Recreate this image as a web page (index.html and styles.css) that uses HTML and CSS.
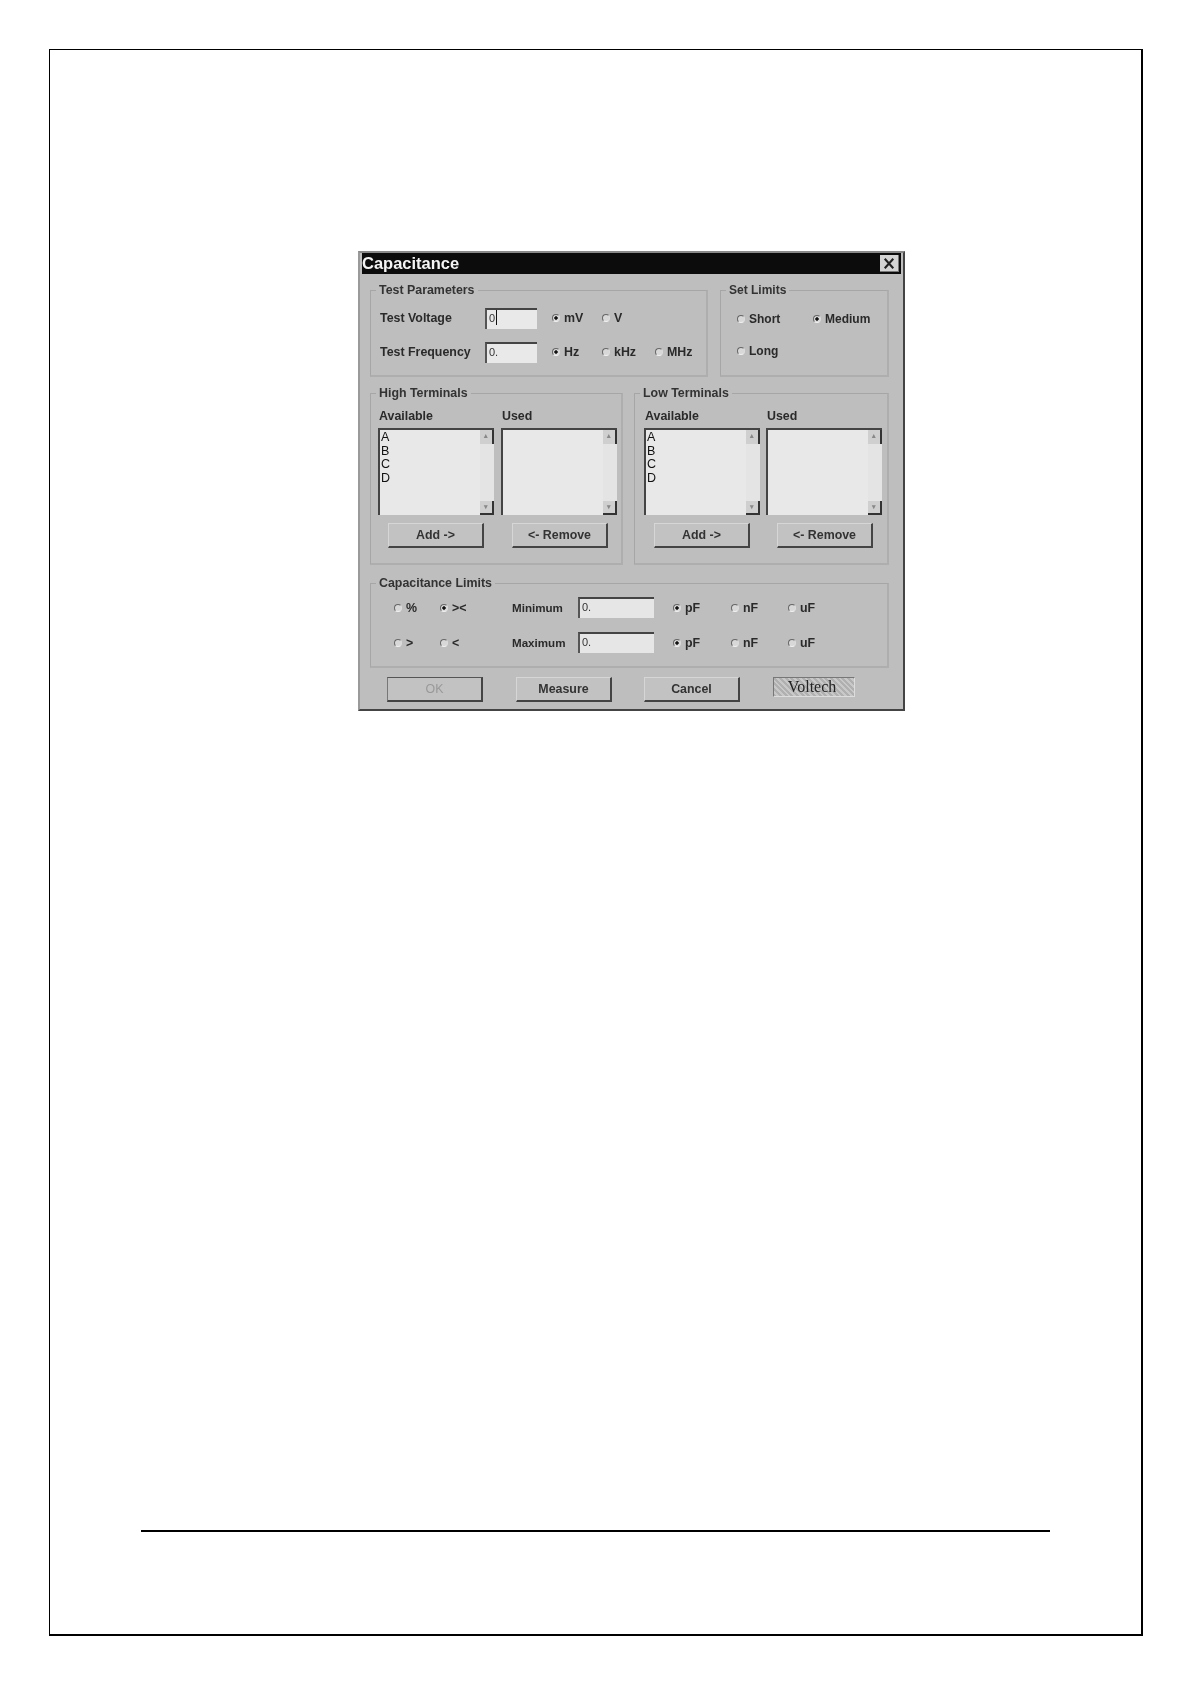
FILE: index.html
```html
<!DOCTYPE html>
<html lang="en">
<head>
<meta charset="utf-8">
<title>Capacitance</title>
<link rel="stylesheet" href="styles.css">
</head>
<body>
<main class="page">
  <section class="dialog">
    <header class="titlebar">
      <span class="title">Capacitance</span>
      <span class="close"><svg width="19" height="17" viewBox="0 0 19 17"><path d="M5 3.5 L14 13.5 M14 3.5 L5 13.5" stroke="#222" stroke-width="2.2" fill="none"/></svg></span>
    </header>

    <div class="row row-top">
      <div class="group group-params">
        <span class="legend">Test Parameters</span>
        <div class="param-row param-first">
          <span class="lbl w-param">Test Voltage</span>
          <span class="field field-param"><span class="caret">0</span></span>
          <span class="opt w-mv"><i class="radio on"></i>mV</span>
          <span class="opt"><i class="radio"></i>V</span>
        </div>
        <div class="param-row param-second">
          <span class="lbl w-param">Test Frequency</span>
          <span class="field field-param">0.</span>
          <span class="opt w-mv"><i class="radio on"></i>Hz</span>
          <span class="opt w-khz"><i class="radio"></i>kHz</span>
          <span class="opt"><i class="radio"></i>MHz</span>
        </div>
      </div>
      <div class="group group-limits">
        <span class="legend">Set Limits</span>
        <div class="limit-row limit-first">
          <span class="opt w-short"><i class="radio"></i>Short</span>
          <span class="opt"><i class="radio on"></i>Medium</span>
        </div>
        <div class="limit-row limit-second">
          <span class="opt"><i class="radio"></i>Long</span>
        </div>
      </div>
    </div>

    <div class="row row-mid">
      <div class="group group-term group-high">
        <span class="legend">High Terminals</span>
        <div class="term-cols">
          <div class="term-col"><span class="lbl cap">Available</span>
            <div class="listbox"><div class="items"><div>A</div><div>B</div><div>C</div><div>D</div></div>
              <div class="scroll"><span class="sb">&#9652;</span><span class="sb sb-end">&#9662;</span></div></div>
            <div class="btn btn-term">Add -&gt;</div>
          </div>
          <div class="term-col"><span class="lbl cap">Used</span>
            <div class="listbox"><div class="items"></div>
              <div class="scroll"><span class="sb">&#9652;</span><span class="sb sb-end">&#9662;</span></div></div>
            <div class="btn btn-term btn-remove">&lt;- Remove</div>
          </div>
        </div>
      </div>
      <div class="group group-term group-low">
        <span class="legend">Low Terminals</span>
        <div class="term-cols">
          <div class="term-col"><span class="lbl cap">Available</span>
            <div class="listbox"><div class="items"><div>A</div><div>B</div><div>C</div><div>D</div></div>
              <div class="scroll"><span class="sb">&#9652;</span><span class="sb sb-end">&#9662;</span></div></div>
            <div class="btn btn-term">Add -&gt;</div>
          </div>
          <div class="term-col"><span class="lbl cap">Used</span>
            <div class="listbox"><div class="items"></div>
              <div class="scroll"><span class="sb">&#9652;</span><span class="sb sb-end">&#9662;</span></div></div>
            <div class="btn btn-term btn-remove">&lt;- Remove</div>
          </div>
        </div>
      </div>
    </div>

    <div class="group group-cap">
      <span class="legend">Capacitance Limits</span>
      <div class="cap-row cap-first">
        <span class="opt w-pct"><i class="radio"></i>%</span>
        <span class="opt w-cmp"><i class="radio on"></i>&gt;&lt;</span>
        <span class="lbl w-minmax">Minimum</span>
        <span class="field field-cap">0.</span>
        <span class="opt w-pf"><i class="radio on"></i>pF</span>
        <span class="opt w-nf"><i class="radio"></i>nF</span>
        <span class="opt"><i class="radio"></i>uF</span>
      </div>
      <div class="cap-row cap-second">
        <span class="opt w-pct"><i class="radio"></i>&gt;</span>
        <span class="opt w-cmp"><i class="radio"></i>&lt;</span>
        <span class="lbl w-minmax">Maximum</span>
        <span class="field field-cap">0.</span>
        <span class="opt w-pf"><i class="radio on"></i>pF</span>
        <span class="opt w-nf"><i class="radio"></i>nF</span>
        <span class="opt"><i class="radio"></i>uF</span>
      </div>
    </div>

    <footer class="actions">
      <div class="btn btn-action btn-disabled">OK</div>
      <div class="btn btn-action">Measure</div>
      <div class="btn btn-action">Cancel</div>
      <div class="logo">Voltech</div>
    </footer>
  </section>
  <hr class="rule">
</main>
</body>
</html>
```

FILE: styles.css
```css
* { box-sizing: border-box; }
html, body { margin: 0; background: #fff; }
body { width: 1191px; height: 1684px; padding: 49px 0 0 49px; font-family: "Liberation Sans", Arial, sans-serif; }

.page {
  width: 1094px; height: 1587px;
  border-style: solid; border-color: #000;
  border-width: 1px 2px 2px 1px;
  padding-top: 201px;
  display: flex; flex-direction: column;
}

.dialog {
  width: 547px; height: 460px;
  margin-left: 308px;
  background: #bebebe;
  border-style: solid;
  border-width: 2px;
  border-color: #8a8a8a #444 #444 #9a9a9a;
  font-size: 12.4px; font-weight: 700; color: #2a2a2a;
  filter: blur(0.6px);
  display: flex; flex-direction: column;
  padding: 0 14px 0 10px;
}

.titlebar {
  height: 21px; margin: 0 -12px 0 -8px;
  background: #0c0c0c; color: #f4f4f4;
  display: flex; align-items: center; justify-content: space-between;
  padding: 0 2px 0 0;
}
.title { font-size: 16.5px; }
.close { width: 19px; height: 17px; background: #d4d4d4; display: flex; align-items: center; justify-content: center; border-right: 1px solid #777; border-bottom: 1px solid #777; }

.row { display: flex; }
.row-top { margin-top: 16px; gap: 12px; }
.row-mid { margin-top: 16px; gap: 11px; }

.group {
  position: relative;
  border: 1px solid #a6a6a6;
  border-bottom: 2px solid #aeaeae;
  border-right: 2px solid #aeaeae;
}
.legend {
  position: absolute; top: -7px; left: 5px;
  background: #bebebe; padding: 0 3px;
  line-height: 13px; white-space: nowrap;
  color: #333;
}

.group-params { width: 338px; height: 87px; padding-left: 9px; }
.group-limits { width: 169px; height: 87px; padding-left: 16px; font-size: 12px; }
.group-high { width: 253px; height: 172px; padding-left: 7px; }
.group-low { width: 255px; height: 172px; padding-left: 9px; }
.group-low .term-cols { gap: 6px; }
.group-cap { width: 519px; height: 85px; margin-top: 18px; padding-left: 23px; }

.lbl { display: block; white-space: nowrap; }
.opt { display: flex; align-items: center; gap: 4px; white-space: nowrap; }

.radio {
  flex: none; display: block;
  width: 8px; height: 8px; border-radius: 50%;
  border: 1px solid; border-color: #666 #dcdcdc #f0f0f0 #666;
  background: #d8d8d8;
}
.radio.on { background: radial-gradient(circle, #111 0 1.4px, #d8d8d8 2px); }

.field {
  display: block; height: 21px;
  background: #e9e9e9;
  border-top: 2px solid #444; border-left: 2px solid #555;
  font-weight: 400; font-size: 11px; line-height: 16px;
  padding-left: 2px; color: #333;
}
.caret { display: inline-block; height: 15px; padding-right: 1px; border-right: 1px solid #111; }

.param-row { display: flex; align-items: center; height: 21px; }
.param-row .lbl, .param-row .opt { padding-bottom: 1px; }
.param-first { margin-top: 17px; }
.param-second { margin-top: 13px; }
.w-param { width: 105px; }
.field-param { width: 52px; margin-right: 15px; }
.w-mv { width: 50px; }
.w-khz { width: 53px; }

.limit-row { display: flex; align-items: center; height: 14px; }
.limit-first { margin-top: 21px; }
.limit-second { margin-top: 18px; }
.w-short { width: 76px; }

.term-cols { display: flex; gap: 7px; }
.term-col { width: 116px; display: flex; flex-direction: column; }
.cap { margin-top: 15px; height: 19px; padding-left: 1px; }

.listbox {
  display: flex; height: 87px; width: 116px;
  background: #e8e8e8;
  border-top: 2px solid #444; border-left: 2px solid #444;
}
.items {
  flex: 1; padding: 1px 0 0 1px;
  font-weight: 400; font-size: 12.5px; line-height: 13.5px; color: #111;
}
.scroll { width: 14px; display: flex; flex-direction: column; justify-content: space-between; background: #e4e4e4; }
.sb {
  height: 14px; background: #cfcfcf; color: #888;
  font-size: 7px; line-height: 12px; text-align: center;
  border-right: 2px solid #333;
}
.sb-end { border-bottom: 2px solid #333; }

.btn {
  display: flex; align-items: center; justify-content: center;
  width: 96px; height: 25px;
  background: #c2c2c2;
  border-style: solid; border-width: 1px 2px 2px 1px;
  border-color: #d6d6d6 #444 #444 #d6d6d6;
  color: #333;
}
.btn-term { margin: 8px 0 0 10px; }
.btn-remove { margin-left: 11px; }

.cap-row { display: flex; align-items: center; height: 21px; }
.cap-first { margin-top: 13px; }
.cap-second { margin-top: 14px; }
.w-pct { width: 46px; }
.w-cmp { width: 72px; }
.w-minmax { width: 66px; font-size: 11.6px; }
.field-cap { width: 76px; margin-right: 19px; background: #e6e6e6; }
.w-pf { width: 58px; }
.w-nf { width: 57px; }

.actions { display: flex; align-items: flex-start; margin: 9px 0 0 17px; }
.btn-action { margin-right: 32px; }
.btn-disabled { color: #999; font-weight: 400; border-color: #555 #444 #444 #777; margin-right: 33px; }
.logo {
  width: 82px; height: 20px; margin-left: 1px; padding-right: 4px;
  font-family: "Liberation Serif", serif; font-size: 16px; font-weight: 400;
  text-align: center; line-height: 18px; color: #222;
  background: repeating-linear-gradient(45deg, #b0b0b0 0 2px, #c8c8c8 2px 4px);
  border: 1px solid; border-color: #777 #ddd #ddd #777;
}

.rule {
  width: 909px; height: 2px; margin: auto 0 0 91px;
  border: 0; background: #000;
  position: relative; top: -102px;
}
```
